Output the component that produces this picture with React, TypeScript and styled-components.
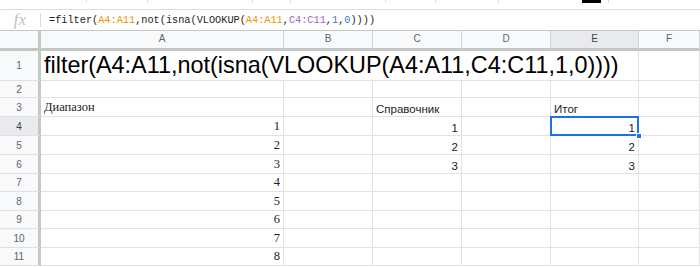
import React from 'react'
import styled, { createGlobalStyle, css } from 'styled-components'

const GlobalStyle = createGlobalStyle`
  html, body {
    margin: 0;
    padding: 0;
    background: #fff;
    overflow: hidden;
  }
`

const Page = styled.div`
  width: 700px;
  height: 267px;
  overflow: hidden;
  font-family: Arial, 'Liberation Sans', sans-serif;
`

const TopStrip = styled.div`
  height: 9px;
  border-bottom: 1px solid #dadce0;
  display: flex;
  align-items: flex-start;
  position: relative;
`

const Tick = styled.span<{ $x: number }>`
  position: absolute;
  top: 0;
  left: ${({ $x }) => $x}px;
  width: 1px;
  height: 3px;
  background: #dadce0;
`

const BlackSwatch = styled.span`
  position: absolute;
  top: 0;
  left: 582px;
  width: 19px;
  height: 3px;
  background: #000;
`

const FormulaBar = styled.div`
  height: 20px;
  display: flex;
  align-items: center;
  border-bottom: 1px solid #c4c7c5;
`

const FxLabel = styled.div`
  width: 40px;
  display: flex;
  justify-content: center;
  align-items: center;
  height: 14px;
  border-right: 1px solid #dadce0;
  font-family: 'Liberation Serif', serif;
  font-style: italic;
  font-size: 16px;
  color: #bdc1c6;
  letter-spacing: 0.5px;
`

const FormulaText = styled.div`
  padding-left: 8px;
  font-family: 'Liberation Mono', monospace;
  font-size: 10.25px;
  color: #222;
  white-space: pre;
`

const Ref = styled.span<{ $c: string }>`
  color: ${({ $c }) => $c};
`

const Sheet = styled.div`
  display: grid;
  grid-template-columns: 41px 243px 89px 89px 89px 88px 1fr;
  grid-template-rows: 20px 30px 17px 19px 19px 19px 19px 18px 19px 18px 19px 18px;
`

const headerBase = css`
  background: #f8f9fa;
  color: #5f6368;
  font-size: 10px;
  display: flex;
  align-items: center;
  justify-content: center;
  box-sizing: border-box;
`

const Corner = styled.div`
  ${headerBase};
  border-right: 3px solid #c4c7c5;
  border-bottom: 3px solid #c4c7c5;
`

const ColHeader = styled.div<{ $active?: boolean }>`
  ${headerBase};
  padding-bottom: 2px;
  border-right: 1px solid #d3d5d6;
  border-bottom: 3px solid #c4c7c5;
  ${({ $active }) => $active && css`
    background: #e8eaed;
    color: #3c4043;
  `}
`

const RowHeader = styled.div<{ $active?: boolean }>`
  ${headerBase};
  border-right: 3px solid #c4c7c5;
  border-bottom: 1px solid #e0e0e0;
  ${({ $active }) => $active && css`
    background: #e8eaed;
    color: #3c4043;
  `}
`

const Cell = styled.div<{ $align?: 'left' | 'right'; $serif?: boolean; $span?: number; $selected?: boolean }>`
  box-sizing: border-box;
  position: relative;
  border-right: 1px solid #e2e2e2;
  border-bottom: 1px solid #e2e2e2;
  display: flex;
  align-items: flex-end;
  justify-content: ${({ $align }) => ($align === 'right' ? 'flex-end' : 'flex-start')};
  padding: 0 3px 1px 3px;
  font-family: ${({ $serif }) => ($serif ? "'Liberation Serif', serif" : "Arial, 'Liberation Sans', sans-serif")};
  font-size: ${({ $serif }) => ($serif ? '12.5px' : '11.5px')};
  color: #222;
  white-space: nowrap;
  grid-column: span ${({ $span }) => $span ?? 1};
  ${({ $selected }) => $selected && css`
    &::before {
      content: '';
      position: absolute;
      left: -1px;
      top: -1px;
      right: -1px;
      bottom: -1px;
      border: 2px solid #1a73e8;
    }
    &::after {
      content: '';
      position: absolute;
      right: -4px;
      bottom: -4px;
      width: 6px;
      height: 6px;
      background: #1a73e8;
      border: 1px solid #fff;
      box-sizing: border-box;
      z-index: 1;
    }
  `}
`

const BigText = styled.span`
  font-size: 23.4px;
  line-height: 27px;
  color: #000;
`

const columns = ['A', 'B', 'C', 'D', 'E', 'F']
const rangeA = ['1', '2', '3', '4', '5', '6', '7', '8']
const lookup: Record<number, string> = { 4: '1', 5: '2', 6: '3' }

export default function App() {
  const rows = [4, 5, 6, 7, 8, 9, 10, 11]
  return (
    <Page>
      <GlobalStyle />
      <TopStrip>
        {[86, 147, 252, 290, 385, 435, 498, 608].map((x) => (
          <Tick key={x} $x={x} />
        ))}
        <BlackSwatch />
      </TopStrip>
      <FormulaBar>
        <FxLabel>fx</FxLabel>
        <FormulaText>
          =filter(<Ref $c="#f09300">A4:A11</Ref>,not(isna(VLOOKUP(<Ref $c="#f09300">A4:A11</Ref>,
          <Ref $c="#a064c8">C4:C11</Ref>,<Ref $c="#3c78d8">1</Ref>,<Ref $c="#3c78d8">0</Ref>))))
        </FormulaText>
      </FormulaBar>
      <Sheet>
        <Corner />
        {columns.map((c) => (
          <ColHeader key={c} $active={c === 'E'}>{c}</ColHeader>
        ))}

        <RowHeader>1</RowHeader>
        <Cell $span={5}>
          <BigText>filter(A4:A11,not(isna(VLOOKUP(A4:A11,C4:C11,1,0))))</BigText>
        </Cell>
        <Cell />

        <RowHeader>2</RowHeader>
        {columns.map((c) => <Cell key={c} />)}

        <RowHeader>3</RowHeader>
        <Cell $serif>Диапазон</Cell>
        <Cell />
        <Cell>Справочник</Cell>
        <Cell />
        <Cell>Итог</Cell>
        <Cell />

        {rows.map((r, i) => (
          <React.Fragment key={r}>
            <RowHeader $active={r === 4}>{r}</RowHeader>
            <Cell $serif $align="right">{rangeA[i]}</Cell>
            <Cell />
            <Cell $align="right">{lookup[r] ?? ''}</Cell>
            <Cell />
            <Cell $align="right" $selected={r === 4}>{lookup[r] ?? ''}</Cell>
            <Cell />
          </React.Fragment>
        ))}
      </Sheet>
    </Page>
  )
}
